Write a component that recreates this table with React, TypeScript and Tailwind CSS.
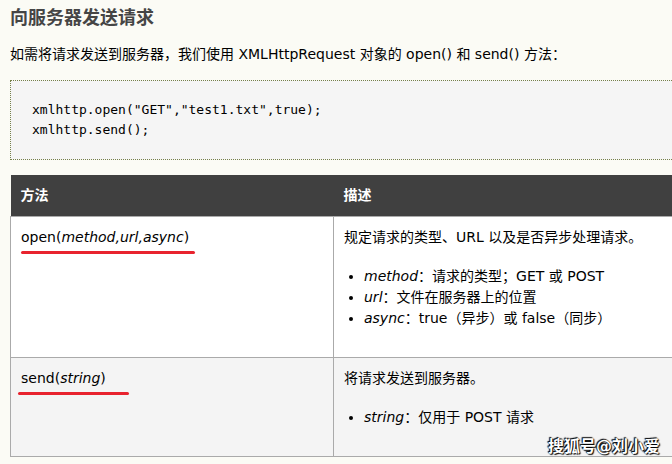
import React from 'react';

const font = "font-['DejaVu_Sans','Noto_Sans_CJK_SC',sans-serif]";

interface MethodRow {
  name: string;
  args: string;
  underline: string;
  desc: string;
  params: { name: string; text: string }[];
  shaded: boolean;
}

const rows: MethodRow[] = [
  {
    name: 'open',
    args: 'method,url,async',
    underline: 'w-[174px] ml-0',
    desc: '规定请求的类型、URL 以及是否异步处理请求。',
    params: [
      { name: 'method', text: '：请求的类型；GET 或 POST' },
      { name: 'url', text: '：文件在服务器上的位置' },
      { name: 'async', text: '：true（异步）或 false（同步）' },
    ],
    shaded: false,
  },
  {
    name: 'send',
    args: 'string',
    underline: 'w-[111px] -ml-[3px]',
    desc: '将请求发送到服务器。',
    params: [{ name: 'string', text: '：仅用于 POST 请求' }],
    shaded: true,
  },
];

const App: React.FC = () => {
  return (
    <div className={`relative w-[672px] h-[464px] overflow-hidden bg-[#fbfbf5] pl-[10px] text-black ${font}`}>
      <h2 className="pt-[6px] text-[18px] leading-[24px] font-bold text-[#454545]">向服务器发送请求</h2>

      <p className="mt-[14px] text-[14px] leading-[21px]">
        如需将请求发送到服务器，我们使用 XMLHttpRequest 对象的 open() 和 send() 方法：
      </p>

      {/* code sample */}
      <pre className="mt-[15px] w-[700px] bg-[#f5f5f5] border border-dotted border-[#76804a] py-[19px] pl-[21px] font-['DejaVu_Sans_Mono',monospace] text-[13px] leading-[20px] text-black">
        {'xmlhttp.open("GET","test1.txt",true);\nxmlhttp.send();'}
      </pre>

      <table className="mt-[15px] w-[720px] border-collapse text-[14px] leading-[21px]">
        <thead>
          <tr className="bg-[#404040] text-white h-[41px]">
            <th className="w-[323px] px-[10px] text-left font-bold">方法</th>
            <th className="px-[10px] text-left font-bold">描述</th>
          </tr>
        </thead>
        <tbody>
          {rows.map(row => (
            <tr key={row.name} className={row.shaded ? 'bg-[#f4f4f4]' : 'bg-white'}>
              <td className="align-top border border-[#aaaaaa] px-[10px] pt-[10px]">
                <div>
                  {row.name}(<i>{row.args}</i>)
                </div>
                <div className={`mt-[3px] h-[3px] rounded-full bg-[#e8232e] ${row.underline}`} />
              </td>
              <td className="align-top border border-[#aaaaaa] px-[10px] pt-[10px] pb-[28px]">
                <p className="mb-[18px]">{row.desc}</p>
                <ul className="list-disc pl-[20px]">
                  {row.params.map(p => (
                    <li key={p.name}>
                      <i>{p.name}</i>
                      {p.text}
                    </li>
                  ))}
                </ul>
              </td>
            </tr>
          ))}
        </tbody>
      </table>

      {/* watermark */}
      <div className="absolute left-[548px] top-[436px] text-[16px] leading-[22px] font-bold text-white [text-shadow:0_0_1px_#000,1px_1px_1px_#000,-1px_-1px_1px_#000]">
        搜狐号@刘小爱
      </div>
    </div>
  );
};

export default App;
